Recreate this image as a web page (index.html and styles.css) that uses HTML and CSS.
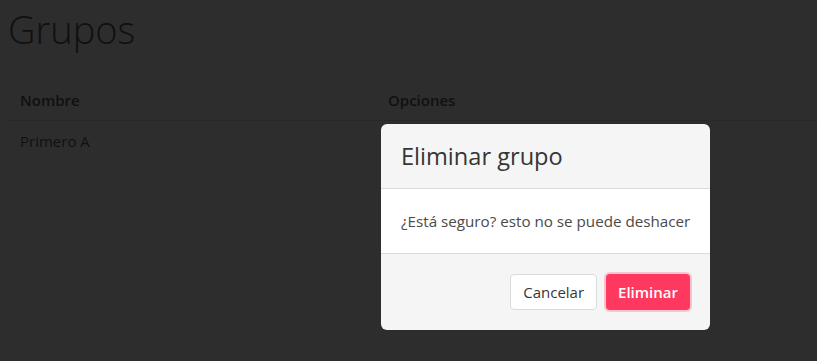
FILE: index.html
```html
<!DOCTYPE html>
<html lang="es">
<head>
<meta charset="utf-8">
<title>Grupos</title>
<link rel="stylesheet" href="styles.css">
</head>
<body>
<main class="page">
  <h1 class="page-title">Grupos</h1>
  <table class="table">
    <thead>
      <tr><th class="col-name">Nombre</th><th>Opciones</th></tr>
    </thead>
    <tbody>
      <tr><td>Primero A</td><td></td></tr>
    </tbody>
  </table>
</main>
<div class="modal">
  <div class="modal-background"></div>
  <div class="modal-card">
    <header class="modal-card-head">
      <p class="modal-card-title">Eliminar grupo</p>
    </header>
    <section class="modal-card-body">¿Está seguro? esto no se puede deshacer</section>
    <footer class="modal-card-foot">
      <button class="button">Cancelar</button>
      <button class="button is-danger">Eliminar</button>
    </footer>
  </div>
</div>
</body>
</html>
```

FILE: styles.css
```css
html, body {
  margin: 0;
  padding: 0;
  background: #ffffff;
  color: #4a4a4a;
  font-family: "Open Sans", "Noto Sans", sans-serif;
  font-size: 16px;
  overflow: hidden;
}
.page {
  padding: 0 0 0 8px;
}
.page-title {
  margin: 0;
  padding-top: 5px;
  height: 80px;
  font-size: 38px;
  font-weight: 300;
  line-height: 48px;
  color: #363636;
  box-sizing: border-box;
}
.table {
  width: calc(100% + 20px);
  border-collapse: collapse;
  color: #363636;
}
.table th, .table td {
  text-align: left;
  padding: 8px 12px;
  line-height: 24px;
  font-size: 15px;
}
.table th {
  font-weight: 600;
  border-bottom: 1px solid #dbdbdb;
}
.col-name {
  width: 344px;
}
.modal {
  position: fixed;
  inset: 0;
  display: flex;
  align-items: flex-start;
  padding: 124px 0 0 381px;
}
.modal-background {
  position: absolute;
  inset: 0;
  background: rgba(10, 10, 10, 0.86);
}
.modal-card {
  position: relative;
  display: flex;
  flex-direction: column;
  border-radius: 6px;
  overflow: hidden;
  width: 329px;
}
.modal-card-head {
  background: #f5f5f5;
  padding: 20px;
  border-bottom: 1px solid #dbdbdb;
}
.modal-card-title {
  margin: 0;
  font-size: 23.6px;
  line-height: 24px;
  color: #363636;
}
.modal-card-body {
  background: #ffffff;
  padding: 20px;
  font-size: 15.2px;
  line-height: 24px;
  color: #4a4a4a;
  white-space: nowrap;
}
.modal-card-foot {
  background: #f5f5f5;
  padding: 20px;
  border-top: 1px solid #dbdbdb;
  display: flex;
  justify-content: flex-end;
  gap: 9px;
}
.button {
  font-family: inherit;
  font-size: 15px;
  height: 36px;
  padding: 0 12px;
  border-radius: 4px;
  border: 1px solid #dbdbdb;
  background: #ffffff;
  color: #363636;
  line-height: 24px;
}
.button.is-danger {
  padding: 0 11px;
  background: #ff3860;
  border-color: transparent;
  color: #ffffff;
  font-weight: 600;
  box-shadow: 0 0 0 2px rgba(255, 56, 96, 0.25);
}
```
